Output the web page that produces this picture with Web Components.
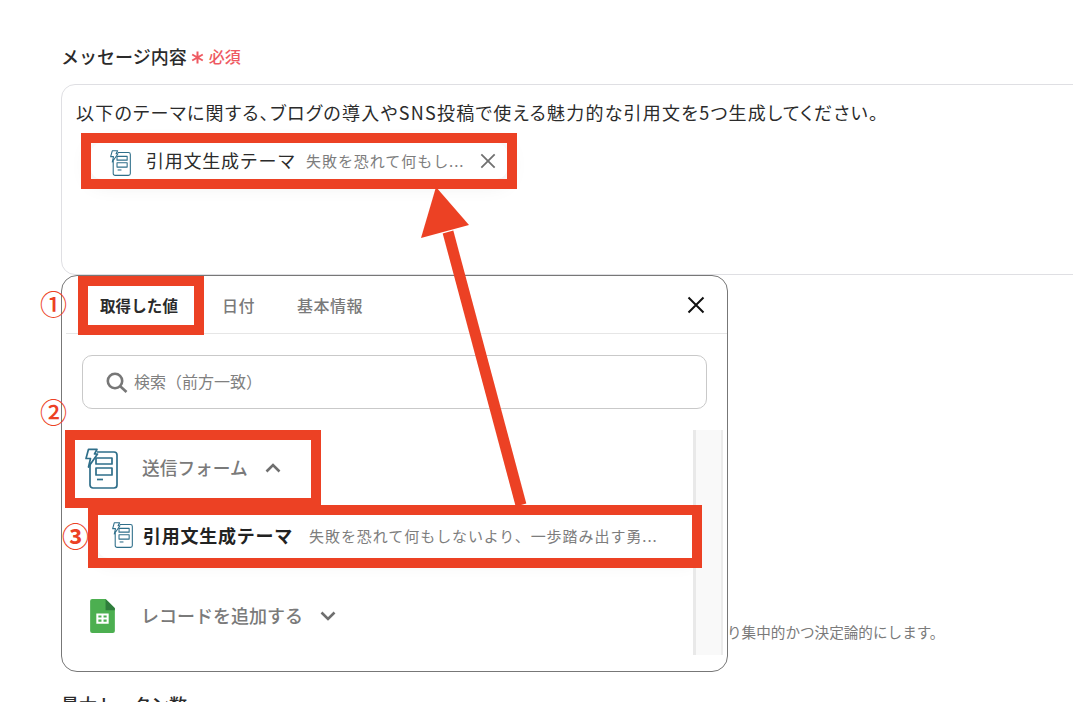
<!DOCTYPE html>
<html lang="ja">
<head>
<meta charset="utf-8">
<title>メッセージ内容</title>
<style>
  html, body { margin: 0; padding: 0; height: 702px; overflow: hidden; background: #fff; }
  body { font-family: "Noto Sans CJK JP", "Noto Sans", sans-serif; color: #2b2b2b; }
</style>
</head>
<body>
<app-page>
  <field-label required>メッセージ内容</field-label>
  <message-box>
    以下のテーマに関する、ブログの導入やSNS投稿で使える魅力的な引用文を5つ生成してください。
    <value-chip name="引用文生成テーマ" value="失敗を恐れて何もし..."></value-chip>
  </message-box>
  <field-note>り集中的かつ決定論的にします。</field-note>
  <field-label class="next">最大トークン数</field-label>

  <picker-panel>
    <source-group icon="form" title="送信フォーム" open></source-group>
    <value-row name="引用文生成テーマ" value="失敗を恐れて何もしないより、一歩踏み出す勇..."></value-row>
    <source-group icon="sheet" title="レコードを追加する"></source-group>
  </picker-panel>

  <note-layer></note-layer>
</app-page>

<script>
  const icons = {
    form: `<svg viewBox="0 0 33 41" width="100%" height="100%" fill="none" stroke="#2f6f8a" stroke-width="1.7" stroke-linejoin="round" style="display:block">
      <path d="M12 4H29a3 3 0 0 1 3 3V37a3 3 0 0 1-3 3H8a3 3 0 0 1-3-3V17"/>
      <path d="M3.5 1.3H12L9.5 6H12.5L3.5 19L5.5 10.5H1Z"/>
      <rect x="11" y="10" width="16" height="6"/>
      <rect x="11" y="20" width="16" height="7"/>
      <path d="M12 31.5H18"/>
    </svg>`,
    sheet: `<svg viewBox="0 0 24 33" width="100%" height="100%" style="display:block">
      <path d="M2 0H15L24 9V31a2 2 0 0 1-2 2H2a2 2 0 0 1-2-2V2a2 2 0 0 1 2-2Z" fill="#4caf50"/>
      <path d="M15 0L24 9V11H15Z" fill="#2f7d3c"/>
      <path d="M6 14H18V24H6ZM8 16V18H11V16ZM13 16V18H16V16ZM8 20V22H11V20ZM13 20V22H16V20Z" fill="#fff" fill-rule="evenodd"/>
    </svg>`,
    close: `<svg viewBox="0 0 18 18" width="100%" height="100%" fill="none" stroke="currentColor" stroke-width="2" style="display:block"><path d="M1.5 1.5L16.5 16.5M16.5 1.5L1.5 16.5"/></svg>`,
    search: `<svg viewBox="0 0 22 21" width="22" height="21" fill="none" stroke="#777" stroke-width="2.6"><circle cx="9" cy="9" r="7.2"/><path d="M14.5 14.5L20.5 20"/></svg>`,
    up: `<svg viewBox="0 0 16 10" width="16" height="10" fill="none" stroke="#6f6f6f" stroke-width="2.6"><path d="M1.5 8.5L8 2L14.5 8.5"/></svg>`,
    down: `<svg viewBox="0 0 16 10" width="16" height="10" fill="none" stroke="#6f6f6f" stroke-width="2.6"><path d="M1.5 1.5L8 8L14.5 1.5"/></svg>`
  };

  class AppPage extends HTMLElement {
    constructor() {
      super();
      this.attachShadow({ mode: 'open' });
    }
    connectedCallback() {
      this.shadowRoot.innerHTML = `
        <style>
          :host {
            display: block;
            position: relative;
            height: 702px;
            overflow: hidden;
            padding: 43px 0 0 61px;
            box-sizing: border-box;
          }
        </style>
        <slot></slot>`;
    }
  }

  class FieldLabel extends HTMLElement {
    constructor() {
      super();
      this.attachShadow({ mode: 'open' });
    }
    connectedCallback() {
      const req = this.hasAttribute('required');
      this.shadowRoot.innerHTML = `
        <style>
          :host {
            display: flex;
            align-items: center;
            height: 26px;
            font-size: 18px;
            font-weight: 500;
            color: #2b2b2b;
            line-height: 26px;
          }
          :host(.next) { margin-top: 49px; }
          .req { display: flex; align-items: center; margin-left: 4px; color: #ee5a62; font-size: 16px; }
          svg { margin: 3px 5px 0 0; }
        </style>
        <slot></slot>
        ${req ? `<span class="req"><svg viewBox="0 0 13 13" width="13" height="13" fill="none" stroke="#ee5a62" stroke-width="2"><path d="M6.5 0.5V12.5M1.2 3.5L11.8 9.5M11.8 3.5L1.2 9.5"/></svg>必須</span>` : ''}`;
    }
  }

  class MessageBox extends HTMLElement {
    constructor() {
      super();
      this.attachShadow({ mode: 'open' });
    }
    connectedCallback() {
      this.shadowRoot.innerHTML = `
        <style>
          :host {
            display: block;
            box-sizing: border-box;
            width: 1100px;
            height: 191px;
            margin-top: 15px;
            padding: 14px 14px;
            border: 1px solid #dfdfe3;
            border-radius: 14px;
            font-size: 18px;
            line-height: 26px;
            color: #2b2b2b;
            font-feature-settings: "palt";
            letter-spacing: 1.25px;
          }
        </style>
        <slot></slot>`;
    }
  }

  class ValueChip extends HTMLElement {
    constructor() {
      super();
      this.attachShadow({ mode: 'open' });
    }
    connectedCallback() {
      this.shadowRoot.innerHTML = `
        <style>
          :host {
            display: flex;
            align-items: center;
            box-sizing: border-box;
            width: 416px;
            height: 36px;
            margin: 18px 0 0 15px;
            padding-left: 19px;
            background: #fff;
            border-radius: 10px;
            box-shadow: 0 4px 22px rgba(0,0,0,.09);
            font-feature-settings: normal;
            letter-spacing: 0;
          }
          .icon { width: 21px; height: 26px; flex: none; margin-top: 3px; }
          .name { margin: -3px 0 0 15px; font-size: 18px; letter-spacing: .75px; white-space: nowrap; color: #2b2b2b; }
          .value { margin: -1px 0 0 10px; font-size: 15px; letter-spacing: .95px; color: #7d7d7d; white-space: nowrap; }
          .close { width: 16px; height: 16px; margin-left: 16px; color: #707070; flex: none; }
        </style>
        <span class="icon">${icons.form}</span>
        <span class="name">${this.getAttribute('name')}</span>
        <span class="value">${this.getAttribute('value')}</span>
        <span class="close">${icons.close}</span>`;
    }
  }

  class FieldNote extends HTMLElement {
    constructor() {
      super();
      this.attachShadow({ mode: 'open' });
    }
    connectedCallback() {
      this.shadowRoot.innerHTML = `
        <style>
          :host {
            display: block;
            margin-top: 347px;
            padding-left: 666px;
            height: 20px;
            line-height: 20px;
            font-size: 14.6px;
            color: #7a7a7a;
          }
        </style>
        <slot></slot>`;
    }
  }

  class PickerPanel extends HTMLElement {
    constructor() {
      super();
      this.attachShadow({ mode: 'open' });
    }
    connectedCallback() {
      this.shadowRoot.innerHTML = `
        <style>
          :host {
            position: absolute;
            left: 61px;
            top: 275px;
            width: 667px;
            height: 397px;
            box-sizing: border-box;
            background: #fff;
            border: 1px solid #777;
            border-radius: 16px;
            display: flex;
            flex-direction: column;
          }
          .tabs {
            display: flex;
            align-items: center;
            height: 57px;
            padding-left: 34px;
            gap: 43px;
            margin-left: 4px;
            border-bottom: 1px solid #e6e6e6;
            font-size: 16px;
            font-weight: 500;
            color: #7a7a7a;
            letter-spacing: .5px;
          }
          .tabs .on { font-size: 15.5px; font-weight: 700; color: #2b2b2b; letter-spacing: .1px; margin-right: 1px; }
          .tabs .date { margin-right: -1px; }
          .tabs .close { width: 18px; height: 18px; margin-left: auto; margin-right: 22px; color: #111; }
          .search {
            display: flex;
            align-items: center;
            gap: 6px;
            height: 54px;
            box-sizing: border-box;
            margin: 21px 20px 0 20px;
            padding-left: 23px;
            border: 1px solid #c9c9c9;
            border-radius: 10px;
            font-size: 16px;
            color: #808080;
          }
          .search span { margin-top: -3px; }
          .body { display: flex; height: 225px; margin-top: 21px; margin-right: 4px; }
          .list { flex: 1; min-width: 0; }
          .bar {
            width: 30px;
            box-sizing: border-box;
            background: #f9f9f9;
            border-left: 3px solid #e9e9e9;
            border-right: 2px solid #ececec;
          }
        </style>
        <div class="tabs">
          <span class="on">取得した値</span><span class="date">日付</span><span>基本情報</span>
          <span class="close">${icons.close}</span>
        </div>
        <div class="search">${icons.search}<span>検索（前方一致）</span></div>
        <div class="body">
          <div class="list"><slot></slot></div>
          <div class="bar"></div>
        </div>`;
    }
  }

  class SourceGroup extends HTMLElement {
    constructor() {
      super();
      this.attachShadow({ mode: 'open' });
    }
    connectedCallback() {
      const kind = this.getAttribute('icon');
      const open = this.hasAttribute('open');
      this.shadowRoot.innerHTML = `
        <style>
          :host {
            display: flex;
            align-items: center;
            height: ${kind === 'form' ? 76 : 60}px;
            margin-top: ${kind === 'form' ? 0 : 28}px;
            padding-left: ${kind === 'form' ? 23 : 28}px;
            font-size: ${kind === 'form' ? 17.7 : 18}px;
            font-weight: 500;
            color: #7a7a7a;
          }
          .icon { flex: none; width: ${kind === 'form' ? 33 : 25}px; height: ${kind === 'form' ? 41 : 34}px; }
          .title { margin: -2px 0 0 ${kind === 'form' ? 24 : 26}px; white-space: nowrap; }
          .chev { display: flex; margin-left: ${kind === 'form' ? 17 : 16.5}px; }
        </style>
        <span class="icon">${icons[kind]}</span>
        <span class="title">${this.getAttribute('title')}</span>
        <span class="chev">${open ? icons.up : icons.down}</span>`;
    }
  }

  class ValueRow extends HTMLElement {
    constructor() {
      super();
      this.attachShadow({ mode: 'open' });
    }
    connectedCallback() {
      this.shadowRoot.innerHTML = `
        <style>
          :host {
            display: flex;
            align-items: center;
            box-sizing: border-box;
            height: 43px;
            margin: 9px 0 0 36px;
            padding: 0 0 3px 14px;
            background: #fff;
            border-radius: 0 0 0 10px;
            box-shadow: 0 6px 18px rgba(0,0,0,.06);
            white-space: nowrap;
          }
          .icon { width: 21px; height: 26px; flex: none; }
          .name { margin-left: 10px; font-size: 18px; font-weight: 700; letter-spacing: .75px; color: #222; }
          .value { margin-left: 16px; font-size: 15px; letter-spacing: .95px; color: #7d7d7d; }
        </style>
        <span class="icon">${icons.form}</span>
        <span class="name">${this.getAttribute('name')}</span>
        <span class="value">${this.getAttribute('value')}</span>`;
    }
  }

  // red annotations drawn on top of the screenshot
  class NoteLayer extends HTMLElement {
    constructor() {
      super();
      this.attachShadow({ mode: 'open' });
    }
    connectedCallback() {
      const boxes = [[81, 133, 436, 56], [78, 276, 126, 59], [65, 430, 256, 78], [88, 505, 614, 63]];
      const nums = [['①', 40, 304, 500], ['②', 40, 412, 500], ['③', 62, 536, 700]];
      this.shadowRoot.innerHTML = `
        <style>
          :host { position: absolute; inset: 0; pointer-events: none; }
          .box { position: absolute; box-sizing: border-box; border: 10px solid #ec4124; }
          .num { position: absolute; width: 25px; height: 30px; line-height: 30px; margin-top: -15px; text-align: center; font-size: 27px; color: #ec4124; }
          svg { position: absolute; left: 0; top: 0; }
        </style>
        ${boxes.map(b => `<div class="box" style="left:${b[0]}px;top:${b[1]}px;width:${b[2]}px;height:${b[3]}px"></div>`).join('')}
        ${nums.map(n => `<span class="num" style="left:${n[1]}px;top:${n[2]}px;font-weight:${n[3]}">${n[0]}</span>`).join('')}
        <svg width="1073" height="702" viewBox="0 0 1073 702">
          <path d="M521 505L448 232" stroke="#ec4124" stroke-width="11" fill="none"/>
          <path d="M436 187L469 225L421 238Z" fill="#ec4124"/>
        </svg>`;
    }
  }

  customElements.define('app-page', AppPage);
  customElements.define('field-label', FieldLabel);
  customElements.define('message-box', MessageBox);
  customElements.define('value-chip', ValueChip);
  customElements.define('field-note', FieldNote);
  customElements.define('picker-panel', PickerPanel);
  customElements.define('source-group', SourceGroup);
  customElements.define('value-row', ValueRow);
  customElements.define('note-layer', NoteLayer);
</script>
</body>
</html>
